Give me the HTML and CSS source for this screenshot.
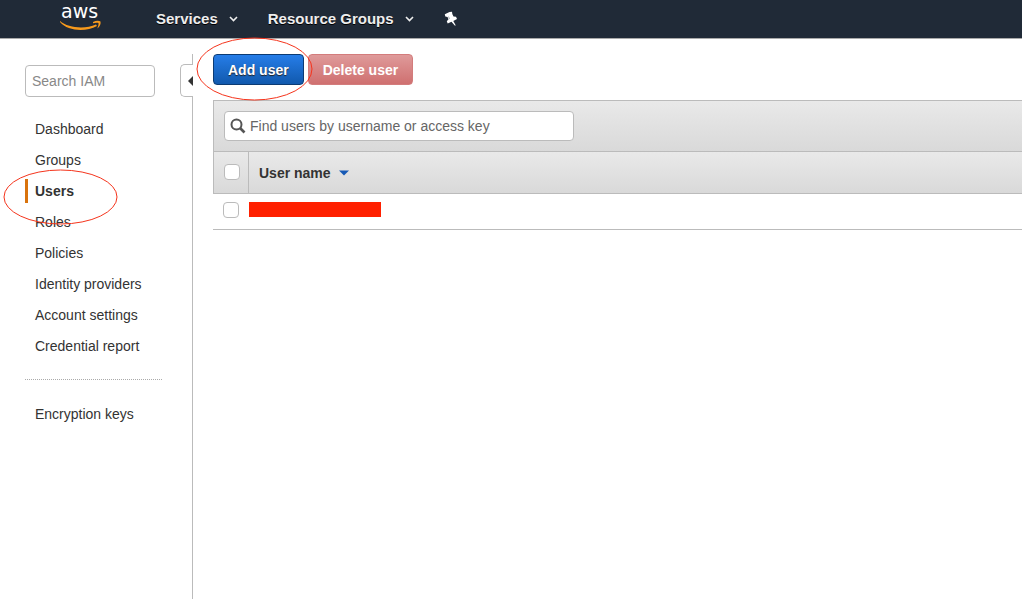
FILE: index.html
```html
<!DOCTYPE html>
<html lang="en">
<head>
<meta charset="utf-8">
<meta name="viewport" content="width=device-width, initial-scale=1">
<title>IAM - Users</title>
<link rel="stylesheet" href="styles.css">
</head>
<body>
<header class="topbar">
  <a class="logo" href="#" aria-label="AWS home">
    <svg width="44" height="38" viewBox="0 0 44 38">
      <text class="logo-text" x="2" y="18">aws</text>
      <path d="M1 21C9 28 26 29.500 37 24.500L38 26C27 32 9 31.500 1 22Z" fill="#f79a1c"/>
      <path d="M34 22C37 20.500 40 20.500 41.500 21.500C42 23.500 41 26.500 38.500 28.500C38.300 27.500 40 25 39.500 23C38 22.500 35.500 23 34 23.200Z" fill="#f79a1c"/>
    </svg>
  </a>
  <nav class="topnav">
    <button class="menu" type="button">Services
      <svg width="9" height="6" viewBox="0 0 9 6"><path d="M1 1L4.500 4.500L8 1" fill="none" stroke="#eee" stroke-width="1.600"/></svg>
    </button>
    <button class="menu" type="button">Resource Groups
      <svg width="9" height="6" viewBox="0 0 9 6"><path d="M1 1L4.500 4.500L8 1" fill="none" stroke="#eee" stroke-width="1.600"/></svg>
    </button>
    <button class="pin" type="button" aria-label="Pin shortcuts">
      <svg width="14" height="16" viewBox="0 0 14 16"><path d="M5.500 1L8 0.800L8.300 3L9.500 5.500L12 5.800L13 8L9.300 10L11.800 14.500L10.700 14.500L7.500 10.700L3.700 12.500L2.800 10.200L4.500 8.300L3.500 6L1.300 5.500L0.800 3.300Z" fill="#fff"/><path d="M4.500 5.500L5.600 8" stroke="#8b929b" stroke-width=".7"/></svg>
    </button>
  </nav>
</header>
<div class="layout">
  <aside class="sidebar">
    <input class="side-search" type="text" placeholder="Search IAM" aria-label="Search IAM">
    <nav class="side-nav">
      <a href="#">Dashboard</a>
      <a href="#">Groups</a>
      <a class="active" href="#" aria-current="page">Users
        <svg class="mark mark-users" width="115" height="56" viewBox="0 0 115 56"><ellipse cx="57.500" cy="28" rx="56.500" ry="27"/></svg>
      </a>
      <a href="#">Roles</a>
      <a href="#">Policies</a>
      <a href="#">Identity providers</a>
      <a href="#">Account settings</a>
      <a href="#">Credential report</a>
    </nav>
    <hr class="divider">
    <nav class="side-nav">
      <a href="#">Encryption keys</a>
    </nav>
  </aside>
  <div class="rail">
    <button class="collapse" type="button" aria-label="Collapse sidebar">
      <svg width="5" height="10" viewBox="0 0 5 10"><path d="M5 0V10L0 5Z" fill="#333"/></svg>
    </button>
    <div class="rail-line"></div>
  </div>
  <main class="content">
    <div class="actions">
      <div class="marked">
        <button class="btn primary" type="button">Add user</button>
        <svg class="mark mark-add" width="117" height="64" viewBox="0 0 117 64"><ellipse cx="58.500" cy="32" rx="57.500" ry="31"/></svg>
      </div>
      <button class="btn danger" type="button" disabled>Delete user</button>
    </div>
    <div class="toolbar">
      <label class="finder">
        <svg width="16" height="16" viewBox="0 0 16 16"><circle cx="6.500" cy="6.500" r="5" fill="none" stroke="#555" stroke-width="2"/><path d="M10 10L14.500 14.500" stroke="#555" stroke-width="2.600"/></svg>
        <input type="text" placeholder="Find users by username or access key" aria-label="Find users by username or access key">
      </label>
    </div>
    <table class="users">
      <thead>
        <tr>
          <th class="pick"><input class="check" type="checkbox" aria-label="Select all users"></th>
          <th class="name" scope="col"><button class="sort" type="button">User name
            <svg width="10" height="6" viewBox="0 0 10 6"><path d="M0 0.500H10L5 5.500Z" fill="#1659b5"/></svg>
          </button></th>
        </tr>
      </thead>
      <tbody>
        <tr>
          <td class="pick"><input class="check" type="checkbox" aria-label="Select user"></td>
          <td><div class="redacted"></div></td>
        </tr>
      </tbody>
    </table>
  </main>
</div>
</body>
</html>
```
FILE: styles.css
```css
* { box-sizing: border-box; }

body {
  margin: 0;
  min-height: 100vh;
  display: flex;
  flex-direction: column;
  background: #fff;
  color: #333;
  font: 14px/24px "Liberation Sans", Arial, sans-serif;
  overflow-x: hidden;
}

button, input { font: inherit; color: inherit; }
button { border: 0; padding: 0; background: none; cursor: pointer; }
svg { display: block; flex: none; }

/* Top bar */
.topbar {
  height: 39px;
  display: flex;
  align-items: center;
  padding-left: 59px;
  background: #202a37;
  border-bottom: 1px solid #aaa;
}
.logo-text { font: 19px "DejaVu Sans", sans-serif; fill: #fff; }
.topnav { display: flex; align-items: center; margin-left: 53px; }
.menu {
  display: flex;
  align-items: center;
  gap: 11px;
  margin-right: 30px;
  color: #eee;
  font-size: 15px;
  font-weight: bold;
  text-shadow: 0 1px 0 #000;
}

/* Layout */
.layout { flex: 1; display: flex; }

/* Sidebar */
.sidebar { width: 180px; flex: none; padding: 26px 18px 24px 25px; }
.side-search {
  display: block;
  width: 130px;
  height: 32px;
  padding: 0 6px;
  border: 1px solid #bbb;
  border-radius: 4px;
  background: #fff;
}
.side-search::placeholder { color: #888; opacity: 1; }
.side-nav { display: flex; flex-direction: column; gap: 7px; margin-top: 20px; }
.side-nav a {
  position: relative;
  padding-left: 10px;
  color: #333;
  text-decoration: none;
}
.side-nav .active {
  padding-left: 7px;
  border-left: 3px solid #d9730d;
  font-weight: bold;
}
.divider { margin: 21px 0 22px; border: 0; border-top: 1px dotted #aaa; }

/* Hand-drawn highlights */
.mark {
  position: absolute;
  z-index: 1;
  fill: none;
  stroke: #f5341c;
  stroke-width: 1;
  pointer-events: none;
}
.mark-users { left: -25px; top: -10px; }
.mark-add { left: -17px; top: -17px; }
.marked { position: relative; }

/* Collapse rail */
.rail { width: 13px; flex: none; display: flex; flex-direction: column; padding-top: 15px; }
.rail::before {
  content: "";
  height: 10px;
  border-right: 1px solid #bbb;
}
.collapse {
  height: 33px;
  display: flex;
  align-items: center;
  justify-content: flex-end;
  border: 1px solid #bbb;
  border-right: 0;
  border-radius: 5px 0 0 5px;
}
.rail-line { flex: 1; border-right: 1px solid #bbb; }

/* Content */
.content { flex: 1; min-width: 0; padding: 15px 0 0 20px; }
.actions { display: flex; gap: 4px; margin-bottom: 15px; }
.btn {
  display: block;
  height: 31px;
  padding: 0 14px;
  border: 1px solid;
  border-radius: 4px;
  color: #fff;
  font-weight: bold;
}
.primary {
  border-color: #0c3b73;
  background: linear-gradient(#267de8, #1159ad);
  text-shadow: 0 1px 1px #222;
}
.danger {
  border-color: #d37c7c;
  background: linear-gradient(#df9a9a, #cf7070);
}
.toolbar {
  padding: 10px;
  border: 1px solid #bbb;
  border-right: 0;
  background: linear-gradient(#e9e9e9, #d9d9d9);
}
.finder {
  display: flex;
  align-items: center;
  gap: 4px;
  width: 350px;
  max-width: 100%;
  height: 30px;
  padding-left: 5px;
  border: 1px solid #bbb;
  border-radius: 4px;
  background: #fff;
}
.finder input { flex: 1; min-width: 0; padding: 0; border: 0; outline: 0; background: none; }
.finder input::placeholder { color: #666; opacity: 1; }

/* Table */
.users { width: 100%; border-collapse: separate; border-spacing: 0; }
.users th, .users td { padding: 0; text-align: left; vertical-align: middle; border-bottom: 1px solid #bbb; }
.users th { height: 42px; background: linear-gradient(#e9e9e9, #d9d9d9); }
.users td { height: 36px; padding-bottom: 4px; }
.users .pick { width: 36px; padding-left: 10px; }
.users th.pick { padding-bottom: 2px; border-left: 1px solid #bbb; border-right: 1px solid #bbb; }
.users th.name { padding-left: 10px; }
.sort { display: flex; align-items: center; gap: 8px; font-weight: bold; }
.check {
  appearance: none;
  display: block;
  width: 16px;
  height: 16px;
  margin: 0;
  border: 1px solid #bbb;
  border-radius: 4px;
  background: #fff;
}
.check:checked { background: #1659b5; }
.redacted { width: 132px; height: 15px; background: #ff2000; }
```
